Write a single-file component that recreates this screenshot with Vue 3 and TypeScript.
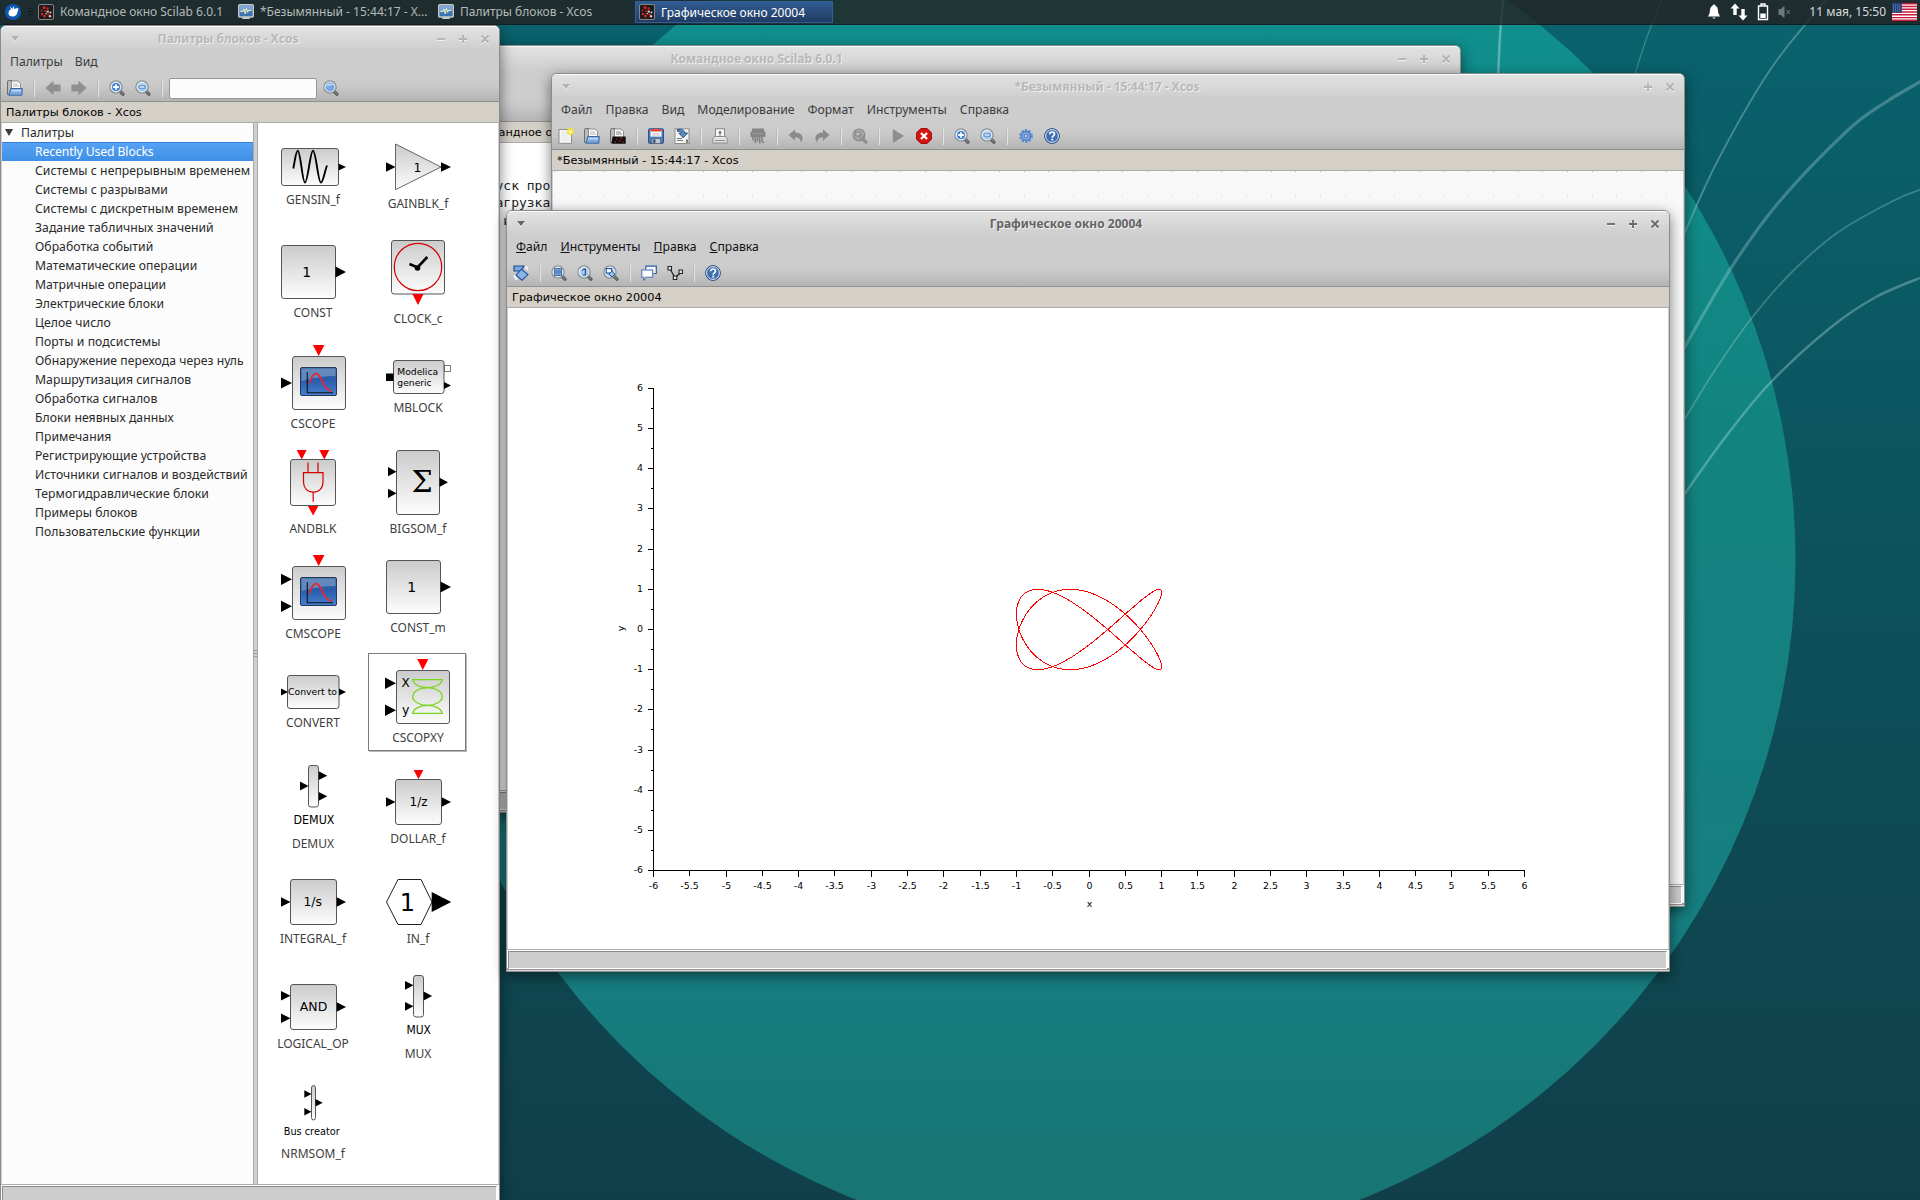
<script setup lang="ts">
interface Arrow {
  x: number
  y: number
  w: number
  h: number
  dir: 'r' | 'd'
}
interface BlockText {
  t: string
  x: number
  y: number
  size: number
  w?: number
  serif?: boolean
}
interface Block {
  name: string
  h: number
  box?: [number, number, number, number]
  arrows: Arrow[]
  texts?: BlockText[]
  art?: 'sine' | 'gain' | 'clock' | 'scope' | 'mblock' | 'and' | 'xy' | 'hex'
  selected?: boolean
}

const r = (x: number, y: number, w: number, h: number): Arrow => ({ x, y, w, h, dir: 'r' })
const d = (x: number, y: number, w: number, h: number): Arrow => ({ x, y, w, h, dir: 'd' })

function arrowPoints(a: Arrow): string {
  if (a.dir === 'r') return `${a.x},${a.y - a.h} ${a.x + a.w},${a.y} ${a.x},${a.y + a.h}`
  return `${a.x - a.h},${a.y} ${a.x + a.h},${a.y} ${a.x},${a.y + a.w}`
}

const blocks: Block[] = [
  { name: 'GENSIN_f', h: 64, box: [18.5, 20.5, 57, 37], arrows: [r(75.5, 39, 7.5, 3.6)], art: 'sine' },
  { name: 'GAINBLK_f', h: 68, arrows: [r(18, 39, 9.5, 4.7), r(73, 39, 10, 4.7)], art: 'gain', texts: [{ t: '1', x: 49.5, y: 43.5, size: 12.5 }] },
  { name: 'CONST', h: 72, box: [18.5, 12.5, 54, 53], arrows: [r(72.5, 39, 10.5, 5.6)], texts: [{ t: '1', x: 43.7, y: 43.5, size: 14 }] },
  { name: 'CLOCK_c', h: 78, box: [23.5, 7.5, 53, 53.5], arrows: [d(50, 61, 11, 5.6)], art: 'clock' },
  { name: 'CSCOPE', h: 78, box: [29.5, 18.5, 53, 53], arrows: [d(55.7, 7, 11, 5.8), r(18, 45, 11, 5.6)], art: 'scope' },
  { name: 'MBLOCK', h: 62, box: [25.5, 22.5, 50.5, 33], arrows: [r(76, 47.5, 7, 3.4)], art: 'mblock', texts: [{ t: 'Modelica', x: 49.7, y: 36.5, size: 9.3, w: 40.7 }, { t: 'generic', x: 46.5, y: 48, size: 9.3, w: 34.3 }] },
  { name: 'ANDBLK', h: 78, box: [27.5, 16.5, 45, 46], arrows: [d(38.7, 7, 9.5, 5), d(61.3, 7, 9.5, 5), d(50.1, 63, 9.5, 5.2)], art: 'and' },
  { name: 'BIGSOM_f', h: 78, box: [28.5, 7.5, 43, 64], arrows: [r(20, 28.7, 8.5, 4.6), r(20, 50.3, 8.5, 4.6), r(71.5, 39.3, 8.5, 4.6)], texts: [{ t: 'Σ', x: 54, y: 49.3, size: 30, serif: true }] },
  { name: 'CMSCOPE', h: 78, box: [29.5, 18.5, 53, 53], arrows: [d(55.7, 7, 11, 5.8), r(18, 31.3, 11, 5.6), r(18, 58.3, 11, 5.6)], art: 'scope' },
  { name: 'CONST_m', h: 72, box: [18.5, 12.5, 54, 53], arrows: [r(72.5, 39, 10.5, 5.6)], texts: [{ t: '1', x: 43.7, y: 43.5, size: 14 }] },
  { name: 'CONVERT', h: 62, box: [24.5, 22.5, 51.5, 33], arrows: [r(18, 39, 7, 3.4), r(76, 39, 7, 3.4)], texts: [{ t: 'Convert to', x: 49.5, y: 42.3, size: 9.3, w: 49 }] },
  { name: 'CSCOPXY', h: 77, box: [28.5, 17.5, 53, 53], arrows: [d(54.8, 6, 11, 5.6), r(17, 30.3, 11, 5.8), r(17, 57.3, 11, 5.8)], art: 'xy', selected: true, texts: [{ t: 'X', x: 37.7, y: 33.5, size: 12 }, { t: 'y', x: 37.7, y: 60.5, size: 12.5 }] },
  { name: 'DEMUX', h: 78, box: [45.5, 7.5, 10, 41.5], arrows: [r(37, 28, 8.5, 4.4), r(55.7, 17.7, 8.6, 4.4), r(55.7, 38.3, 8.6, 4.4)], texts: [{ t: 'DEMUX', x: 51, y: 65.7, size: 12, w: 41 }] },
  { name: 'DOLLAR_f', h: 73, box: [27.5, 21.5, 46, 45], arrows: [d(50.5, 12, 9.3, 4.8), r(18, 44, 9.5, 4.7), r(73.7, 44, 9.3, 4.7)], texts: [{ t: '1/z', x: 50.5, y: 48.2, size: 12, w: 18 }] },
  { name: 'INTEGRAL_f', h: 68, box: [27.5, 16.5, 46, 45], arrows: [r(18, 39, 9.5, 4.7), r(73.7, 39, 9.3, 4.7)], texts: [{ t: '1/s', x: 49.7, y: 43.2, size: 12, w: 18.5 }] },
  { name: 'IN_f', h: 68, arrows: [r(63.7, 39, 19.5, 10)], art: 'hex', texts: [{ t: '1', x: 39.3, y: 47.7, size: 24 }] },
  { name: 'LOGICAL_OP', h: 68, box: [27.5, 16.5, 46, 45], arrows: [r(18, 27.7, 9.5, 4.7), r(18, 50.3, 9.5, 4.7), r(73.7, 39, 9.3, 4.7)], texts: [{ t: 'AND', x: 50.5, y: 43.3, size: 12.5, w: 27.5 }] },
  { name: 'MUX', h: 78, box: [45.5, 7.5, 10, 41.5], arrows: [r(37, 17.3, 8.5, 4.4), r(37, 38.3, 8.5, 4.4), r(55.7, 28, 8.4, 4.4)], texts: [{ t: 'MUX', x: 50.7, y: 65.7, size: 12, w: 24.5 }] },
  { name: 'NRMSOM_f', h: 73, box: [48.5, 12.5, 4, 34.5], arrows: [r(41.3, 21, 7.2, 3.8), r(41.3, 38.7, 7.2, 3.8), r(52.5, 29.7, 7.2, 3.8)], texts: [{ t: 'Bus creator', x: 48.7, y: 61.6, size: 9.6, w: 56 }] },
]

const palettes: string[] = [
  'Recently Used Blocks',
  'Системы с непрерывным временем',
  'Системы с разрывами',
  'Системы с дискретным временем',
  'Задание табличных значений',
  'Обработка событий',
  'Математические операции',
  'Матричные операции',
  'Электрические блоки',
  'Целое число',
  'Порты и подсистемы',
  'Обнаружение перехода через нуль',
  'Маршрутизация сигналов',
  'Обработка сигналов',
  'Блоки неявных данных',
  'Примечания',
  'Регистрирующие устройства',
  'Источники сигналов и воздействий',
  'Термогидравлические блоки',
  'Примеры блоков',
  'Пользовательские функции',
]

const xcosMenu = ['Файл', 'Правка', 'Вид', 'Моделирование', 'Формат', 'Инструменты', 'Справка']
const figureMenu = ['Файл', 'Инструменты', 'Правка', 'Справка']
const xcosTools = ['new', 'open', 'openscilab', '|', 'save', 'export', '|', 'print', '|', 'shred', '|', 'undo', 'redo', '|', 'fit', '|', 'play', 'stop', '|', 'zoomin', 'zoomout', '|', 'gear', 'help']
const figureTools = ['rotate', '|', 'zoomgrid', 'zoomone', 'zoomarea', '|', 'copywin', 'datatip', '|', 'help']

const X0 = 1089
const Y0 = 629.5
const SX = 72.58
const SY = 40.17

const ticks = Array.from({ length: 25 }, (_, i) => -6 + i * 0.5)
const xTicks = ticks.map((v) => ({ v, px: Math.round(X0 + v * SX - 0.5) + 0.5, major: Number.isInteger(v) }))
const yTicks = ticks.map((v) => ({ v, py: Math.round(Y0 - v * SY - 0.5) + 0.5, major: Number.isInteger(v) }))

const curve = Array.from({ length: 361 }, (_, i) => {
  const t = (i * Math.PI) / 180
  const x = X0 + SX * Math.sin(2 * t + Math.PI / 4)
  const y = Y0 - SY * Math.sin(3 * t)
  return `${x.toFixed(2)},${y.toFixed(2)}`
}).join(' ')

const dots = Array.from({ length: 46 }, (_, i) => Math.round(578 + (i - 1) * 24.7 - 552))

// Catmull-Rom spline through the sample points of a wallpaper ray
function spline(p: number[][]): string {
  let s = `M${p[0][0]} ${p[0][1]}`
  for (let i = 0; i < p.length - 1; i++) {
    const a = p[Math.max(0, i - 1)]
    const b = p[i]
    const c = p[i + 1]
    const e = p[Math.min(p.length - 1, i + 2)]
    s += `C${b[0] + (c[0] - a[0]) / 6} ${b[1] + (c[1] - a[1]) / 6} ${c[0] - (e[0] - b[0]) / 6} ${c[1] - (e[1] - b[1]) / 6} ${c[0]} ${c[1]}`
  }
  return s
}
const rays = [
  { w: 2.4, o: 0.4, p: spline([[1503, 0], [1500, 36], [1498, 80]]) },
  { w: 1.3, o: 0.25, p: spline([[1662, 0], [1647, 37], [1635, 74]]) },
  { w: 1.8, o: 0.32, p: spline([[1826, 0], [1809, 20], [1768, 73], [1718, 160], [1686, 230], [1672, 264]]) },
  { w: 3.2, o: 0.28, p: spline([[1925, 79], [1886, 102], [1847, 131], [1779, 202], [1731, 268], [1686, 345], [1671, 374]]) },
  { w: 1.8, o: 0.26, p: spline([[1925, 188], [1895, 200], [1837, 233], [1790, 274], [1751, 319], [1717, 367], [1686, 417], [1671, 444]]) },
  { w: 2.5, o: 0.32, p: spline([[1925, 276], [1876, 297], [1830, 328], [1771, 382], [1727, 435], [1686, 492], [1671, 515]]) },
]
</script>

<template>
  <div class="desktop">
    <svg class="wallpaper" width="1920" height="1200" viewBox="0 0 1920 1200">
      <defs>
        <linearGradient id="wallBg" x1="0" y1="0" x2="0" y2="1">
          <stop offset="0" stop-color="#09636d" />
          <stop offset=".35" stop-color="#0b5660" />
          <stop offset=".75" stop-color="#0f4852" />
          <stop offset="1" stop-color="#103f4a" />
        </linearGradient>
        <linearGradient id="wallDisc" x1="0" y1="0" x2="0" y2="1">
          <stop offset=".08" stop-color="#10908f" />
          <stop offset=".4" stop-color="#128480" />
          <stop offset=".8" stop-color="#177d80" />
          <stop offset="1" stop-color="#18736f" />
        </linearGradient>
      </defs>
      <rect width="1920" height="1200" fill="url(#wallBg)" />
      <circle cx="1108" cy="560" r="687.500" fill="url(#wallDisc)" />
      <path v-for="(ray, i) in rays" :key="i" :d="ray.p" fill="none" stroke="#cdebe8" :stroke-width="ray.w" :stroke-opacity="ray.o" />
    </svg>

    <svg class="defs" width="0" height="0">
      <defs>
        <linearGradient id="boxFill" x1="0" y1="0" x2="0" y2="1">
          <stop offset="0" stop-color="#cbcbcb" />
          <stop offset="1" stop-color="#fdfdfd" />
        </linearGradient>
        <linearGradient id="screenFill" x1="0" y1="0" x2="0" y2="1">
          <stop offset="0" stop-color="#3465a4" />
          <stop offset=".45" stop-color="#2a5caa" />
          <stop offset="1" stop-color="#4480d0" />
        </linearGradient>
        <linearGradient id="lens" x1="0" y1="0" x2="1" y2="1">
          <stop offset="0" stop-color="#d4e6f8" />
          <stop offset="1" stop-color="#86b4e4" />
        </linearGradient>
        <symbol id="i-lens" viewBox="0 0 16 16">
          <path d="M10.6 10.8 13.9 14.2" stroke="#4c4f50" stroke-width="3.2" stroke-linecap="round" />
          <path d="M11.8 11.8 13.9 14" stroke="#8a8d8b" stroke-width="1.2" stroke-linecap="round" />
          <circle cx="7" cy="7" r="6.1" fill="url(#lens)" stroke="#8b8f90" stroke-width="1.3" />
          <circle cx="7" cy="7" r="4.9" fill="none" stroke="#eef5fb" stroke-width=".9" />
        </symbol>
        <symbol id="i-zoomin" viewBox="0 0 16 16">
          <use href="#i-lens" width="16" height="16" />
          <circle cx="7" cy="7" r="3.9" fill="#3f7fcb" />
          <path d="M7 4.2V9.8M4.2 7H9.8" stroke="#fff" stroke-width="1.8" />
        </symbol>
        <symbol id="i-zoomout" viewBox="0 0 16 16">
          <use href="#i-lens" width="16" height="16" />
          <path d="M3.6 7H10.4" stroke="#2f6fbd" stroke-width="3" />
          <path d="M4.4 7H9.6" stroke="#fff" stroke-width="1.4" />
        </symbol>
        <symbol id="i-search" viewBox="0 0 16 16">
          <use href="#i-lens" width="16" height="16" />
          <circle cx="7" cy="7" r="4.4" fill="#77a8dd" />
          <path d="M3.6 6.6A3.6 3.6 0 0 1 7 3.4C8.6 3.4 9.6 4.2 10 5.2 8 5 5.4 5.4 3.6 6.6Z" fill="#c9def4" />
        </symbol>
        <symbol id="i-zoomgrid" viewBox="0 0 16 16">
          <use href="#i-lens" width="16" height="16" />
          <rect x="3.2" y="3.2" width="7.600" height="7.600" fill="#1f56a0" />
          <path d="M4.200 4.900H9.900M4.200 7H9.900M4.200 9.100H9.900" stroke="#f2f8ff" stroke-width="1.200" stroke-dasharray="1.300 .8" />
        </symbol>
        <symbol id="i-zoomone" viewBox="0 0 16 16">
          <use href="#i-lens" width="16" height="16" />
          <path d="M4.6 5.6 6.6 3.4H9V10.6H5.8V6.2Z" fill="#1f56a0" />
          <path d="M6.9 4.9V9.6" stroke="#fff" stroke-width="1.3" />
        </symbol>
        <symbol id="i-zoomarea" viewBox="0 0 16 16">
          <use href="#i-lens" width="16" height="16" />
          <rect x="3.2" y="3.6" width="5.4" height="4.4" fill="#fff" stroke="#1f56a0" stroke-width="1.1" />
          <path d="M8.8 6.2 12 9.2 9 12 6 9.2Z" fill="#9cc3ee" stroke="#1f56a0" />
        </symbol>
        <symbol id="i-fit" viewBox="0 0 16 16">
          <path d="M10.6 10.8 13.9 14.2" stroke="#8c8c8c" stroke-width="3.2" stroke-linecap="round" />
          <circle cx="7" cy="7" r="5.8" fill="#ababab" stroke="#8f8f8f" stroke-width="1.5" />
          <rect x="3.6" y="4" width="4.8" height="4" fill="#b9b9b9" stroke="#858585" />
          <path d="M8.8 6.2 11.6 9 9 11.6 6.4 9Z" fill="#a2a2a2" stroke="#858585" />
        </symbol>
        <symbol id="i-open" viewBox="0 0 16 16">
          <path d="M.5 14.5V1.5C.5 1 .8.6 1.300 .6H5L6 2.500V14.500Z" fill="#b9bcb8" stroke="#6b6e6a" />
          <path d="M4.500 1H11L13.500 3.400V10H4.500Z" fill="#fafafa" stroke="#80837f" stroke-width=".9" />
          <path d="M6 4H11M6 6H12" stroke="#b3b5b1" stroke-width=".9" />
          <path d="M3.800 8.500H15.300L14.800 15.200H1.800Z" fill="#7aa8dc" stroke="#3566a8" />
          <path d="M4.600 9.600H14.200L14 11.800H3.900Z" fill="#b4d0f0" />
        </symbol>
        <symbol id="i-openscilab" viewBox="0 0 16 16">
          <path d="M.5 14.5V1.5C.5 1 .8.6 1.300 .6H5L6 2.500V14.500Z" fill="#b9bcb8" stroke="#6b6e6a" />
          <path d="M4.500 1H11L13.500 3.400V10H4.500Z" fill="#fafafa" stroke="#80837f" stroke-width=".9" />
          <path d="M6 4H11M6 6H12" stroke="#777" stroke-width=".9" />
          <path d="M2.500 8.500H15.700V15.700H1.500Z" fill="#0c0c0c" />
          <path d="M6 11H7.400M10.500 10.200H12.300M4.500 13.800H5.800M9 12.800H10.400M12.300 14H13.800" stroke="#e0221c" stroke-width="1.200" />
        </symbol>
        <symbol id="i-new" viewBox="0 0 16 16">
          <rect x="1" y="1.500" width="12.500" height="13.800" fill="#f6f6f4" stroke="#8d908b" />
          <rect x="3" y="3.500" width="8.500" height="9.800" fill="#ededeb" />
          <circle cx="12.500" cy="3.500" r="3.600" fill="#f4e52a" fill-opacity=".85" />
          <circle cx="12.500" cy="3.500" r="1.500" fill="#fffbc0" />
        </symbol>
        <symbol id="i-save" viewBox="0 0 16 16">
          <rect x=".6" y=".8" width="14.800" height="14.600" rx="1" fill="#4a7dbd" stroke="#264d82" />
          <rect x="2.500" y="1.200" width="11" height="7.400" fill="#fff" />
          <rect x="2.500" y="1.200" width="11" height="2.200" fill="#e03127" />
          <path d="M4 5.200H12M4 7H12" stroke="#b5b5b5" stroke-width=".8" />
          <rect x="4" y="10.500" width="8.500" height="5" fill="#c3c6c8" stroke="#50616f" stroke-width=".7" />
          <rect x="5.200" y="11.400" width="2.300" height="3.400" fill="#344f70" />
        </symbol>
        <symbol id="i-export" viewBox="0 0 16 16">
          <rect x="1" y=".8" width="14" height="14.700" fill="#f4f4f2" stroke="#8a8d88" />
          <path d="M3 3H6M3 12.500H9M3 10.500H8" stroke="#777" stroke-width="1" />
          <path d="M3.500 1.500C7.500.5 10.500 2 10.800 5H13.600L9.200 9.800 4.800 5H7.400C7.300 3.400 6 2.300 3.500 3.300Z" fill="#5a8dc4" stroke="#1f4b80" stroke-width=".9" />
          <path d="M13 11.500V14.800" stroke="#222" stroke-width="1.200" />
        </symbol>
        <symbol id="i-print" viewBox="0 0 16 16">
          <rect x="3.500" y=".8" width="9" height="9" fill="#f6f6f6" stroke="#8a8a8a" />
          <path d="M8 2.500 10 5H8.700V7.500H7.300V5H6Z" fill="#777" />
          <path d="M2.500 8.500H13.500L15.300 11V15H.7V11Z" fill="#e6e6e6" stroke="#8a8a8a" />
          <path d="M2.500 12.500H13.500" stroke="#8f8f8f" stroke-width="1.200" />
        </symbol>
        <symbol id="i-shred" viewBox="0 0 16 16">
          <path d="M2 .6H14V3.500H15.500V9H.5V3.500H2Z" fill="#858585" />
          <rect x="2.500" y="5" width="11" height="1.300" fill="#979797" />
          <path d="M3 9V12.500M5.300 9V15M7.500 9V13.500M9.700 9V15.500M12 9V13.500L14 14.800" stroke="#858585" stroke-width="1.700" fill="none" />
        </symbol>
        <symbol id="i-undo" viewBox="0 0 16 16">
          <path d="M.6 7 7 1.200V4.500C12 4.500 15 7 14.600 11.500L12.500 15C13 11.500 11.500 9.500 7 9.500V12.800Z" fill="#8b8b8b" />
        </symbol>
        <symbol id="i-redo" viewBox="0 0 16 16">
          <path d="M15.400 7 9 1.200V4.500C4 4.500 1 7 1.400 11.500L3.500 15C3 11.500 4.500 9.500 9 9.500V12.800Z" fill="#8b8b8b" />
        </symbol>
        <symbol id="i-play" viewBox="0 0 16 16">
          <path d="M3.300 1.800 13.300 8 3.300 14.200Z" fill="#8e8e8e" stroke="#7c7c7c" stroke-width=".6" />
        </symbol>
        <symbol id="i-stop" viewBox="0 0 16 16">
          <path d="M4.800.6H11.200L15.400 4.800V11.200L11.200 15.400H4.800L.6 11.200V4.800Z" fill="#d5140f" stroke="#9b0a08" />
          <path d="M5 5 11 11M11 5 5 11" stroke="#fff" stroke-width="2.300" />
        </symbol>
        <symbol id="i-gear" viewBox="0 0 16 16">
          <circle cx="8" cy="8" r="5.600" fill="none" stroke="#5b8fd6" stroke-width="2.600" stroke-dasharray="2.300 1.218" />
          <circle cx="8" cy="8" r="4.300" fill="#8ab2e6" stroke="#3d75c2" stroke-width="1.200" />
          <circle cx="8" cy="8" r="1.900" fill="#cfcfcf" stroke="#3d75c2" stroke-width="1" />
        </symbol>
        <symbol id="i-help" viewBox="0 0 16 16">
          <circle cx="8" cy="8" r="7.400" fill="#2b5a9e" stroke="#23497f" stroke-width=".9" />
          <circle cx="8" cy="8" r="6.400" fill="#3f6fb1" stroke="#e8eff8" stroke-width="1" />
          <path d="M5.700 6.300C5.700 3.300 10.500 3.300 10.500 6.100 10.500 7.900 8.200 7.800 8.200 9.700" fill="none" stroke="#fff" stroke-width="1.700" />
          <rect x="7.300" y="10.700" width="1.800" height="1.800" fill="#fff" />
        </symbol>
        <symbol id="i-back" viewBox="0 0 16 16">
          <path d="M.4 8 8.500.8V4.500H15.600V11.500H8.500V15.200Z" fill="#8f8f8f" />
        </symbol>
        <symbol id="i-forward" viewBox="0 0 16 16">
          <path d="M15.600 8 7.500.8V4.500H.4V11.500H7.500V15.200Z" fill="#8f8f8f" />
        </symbol>
        <symbol id="i-rotate" viewBox="0 0 16 16">
          <path d="M1 1H11L8 6H1Z" fill="#7ba7dc" stroke="#1c4d8f" stroke-width="1.200" />
          <path d="M8.500 4.200 15 9.500 9 15.200 3 10Z" fill="#8db5e6" stroke="#24589e" stroke-width="1.100" />
          <path d="M12 1.500C14 2 14.500 3.500 14.500 5M1.500 10C1.500 12.500 2.500 14 4.500 14.500" stroke="#f4f4f4" stroke-width="1.800" fill="none" />
        </symbol>
        <symbol id="i-copywin" viewBox="0 0 16 16">
          <path d="M4.800 4.500V1.200H15.300V8.500H12.500" fill="#f4f8fd" stroke="#2c5fa6" stroke-width="1.200" />
          <rect x=".8" y="5" width="10.800" height="7.300" fill="#fbfdff" stroke="#5f83b5" stroke-width="1.200" />
          <path d="M2.800 12.500V15.300L5.500 12.500" fill="#fbfdff" stroke="#2c5fa6" />
        </symbol>
        <symbol id="i-datatip" viewBox="0 0 16 16">
          <path d="M3 4 8 12.500 13.500 8" fill="none" stroke="#222" stroke-width="1.300" />
          <path d="M1 1.500H4.500V5H1ZM12 5H15.500V8.500H12ZM6.300 11H9.800V14.500H6.300Z" fill="#e8e8e8" stroke="#222" stroke-width="1.100" />
        </symbol>
        <symbol id="i-scilab" viewBox="0 0 16 16">
          <rect x=".5" y=".5" width="15" height="15" rx="1.500" fill="#1b1b1d" stroke="#8a8482" />
          <g fill="#d8221e">
            <circle cx="6" cy="3.600" r="1.500" />
            <circle cx="9.500" cy="4.500" r="1.200" />
            <circle cx="3.500" cy="6.500" r=".9" />
            <circle cx="7" cy="7" r="1" />
            <circle cx="4" cy="10" r="1.300" />
            <circle cx="6.500" cy="12" r="1.500" />
            <circle cx="10.500" cy="10.500" r="1.100" />
          </g>
          <g fill="#e9c3bd">
            <circle cx="9.800" cy="7.600" r="1.200" />
            <circle cx="12.500" cy="8.500" r="1" />
            <circle cx="12" cy="12.300" r="1.200" />
            <circle cx="8.200" cy="9.600" r=".8" />
          </g>
        </symbol>
        <symbol id="i-xcos" viewBox="0 0 16 16">
          <rect x=".7" y=".7" width="14.600" height="12.300" rx="1" fill="#3f74b4" stroke="#c9cbc9" stroke-width="1.400" />
          <path d="M1.500 1.500H14.500V6C9 6.500 5 7 1.500 9Z" fill="#7fa6d3" />
          <path d="M2.500 7.500H5L6 5 7.200 10 8.500 4.500 9.700 8.500 10.500 6.500H13.500" fill="none" stroke="#e6f3b8" stroke-width="1" />
          <path d="M4 15H12L11 13H5Z" fill="#c9cbc9" />
        </symbol>
      </defs>
    </svg>

    <!-- console window -->
    <section class="win console">
      <header class="head">
        <div class="title">
          <span class="caret"></span>
          <span class="caption">Командное окно Scilab 6.0.1</span>
          <svg class="btn" viewBox="0 0 22 22"><path d="M7 11H15" /></svg>
          <svg class="btn" viewBox="0 0 22 22"><path d="M7 11H15M11 7V15" /></svg>
          <svg class="btn" viewBox="0 0 22 22"><path d="M7.500 7.500 14.500 14.500M14.500 7.500 7.500 14.500" /></svg>
        </div>
      </header>
      <div class="dock dock-console">Командное окно Scilab 6.0.1</div>
      <div class="body"><pre class="log">Запуск программы:
  загрузка исходного окружения
    и</pre></div>
      <footer class="status"><div></div></footer>
    </section>

    <!-- Xcos diagram window -->
    <section class="win xcos">
      <header class="head">
        <div class="title">
          <span class="caret"></span>
          <span class="caption">*Безымянный - 15:44:17 - Xcos</span>
          <svg class="btn" viewBox="0 0 22 22"><path d="M7 11H15M11 7V15" /></svg>
          <svg class="btn" viewBox="0 0 22 22"><path d="M7.500 7.500 14.500 14.500M14.500 7.500 7.500 14.500" /></svg>
        </div>
        <nav class="menu"><span v-for="m in xcosMenu" :key="m">{{ m }}</span></nav>
        <div class="tools">
          <template v-for="(t, i) in xcosTools" :key="i">
            <span v-if="t === '|'" class="sep"></span>
            <svg v-else class="ico"><use :href="'#i-' + t" /></svg>
          </template>
        </div>
      </header>
      <div class="dock">*Безымянный - 15:44:17 - Xcos</div>
      <div class="body canvas">
        <svg width="1132" height="60" shape-rendering="crispEdges">
          <template v-for="x in dots" :key="x">
            <rect :x="x" y="0" width="1" height="1" fill="#bdbdbd" />
            <rect :x="x" y="25" width="1" height="1" fill="#c8c8c8" />
          </template>
        </svg>
      </div>
      <footer class="status"><div></div></footer>
    </section>

    <!-- palette browser -->
    <section class="win palette">
      <header class="head">
        <div class="title">
          <span class="caret"></span>
          <span class="caption">Палитры блоков - Xcos</span>
          <svg class="btn" viewBox="0 0 22 22"><path d="M7 11H15" /></svg>
          <svg class="btn" viewBox="0 0 22 22"><path d="M7 11H15M11 7V15" /></svg>
          <svg class="btn" viewBox="0 0 22 22"><path d="M7.500 7.500 14.500 14.500M14.500 7.500 7.500 14.500" /></svg>
        </div>
        <nav class="menu menu-palette"><span>Палитры</span><span>Вид</span></nav>
        <div class="tools">
          <svg class="ico"><use href="#i-open" /></svg>
          <span class="sep"></span>
          <svg class="ico"><use href="#i-back" /></svg>
          <svg class="ico"><use href="#i-forward" /></svg>
          <span class="sep"></span>
          <svg class="ico"><use href="#i-zoomin" /></svg>
          <svg class="ico"><use href="#i-zoomout" /></svg>
          <span class="sep"></span>
          <span class="field"></span>
          <svg class="ico"><use href="#i-search" /></svg>
        </div>
      </header>
      <div class="dock">Палитры блоков - Xcos</div>
      <div class="body split">
        <div class="tree">
          <div class="root"><span class="twisty"></span>Палитры</div>
          <div v-for="(p, i) in palettes" :key="p" class="leaf" :class="{ on: i === 0 }">{{ p }}</div>
        </div>
        <div class="divider"><i></i><i></i><i></i></div>
        <div class="grid">
          <figure v-for="b in blocks" :key="b.name" class="cell" :class="{ sel: b.selected }">
            <svg class="pic" width="98" :height="b.h" :viewBox="`0 0 98 ${b.h}`">
              <rect v-if="b.box" :x="b.box[0]" :y="b.box[1]" :width="b.box[2]" :height="b.box[3]" rx="2.500" fill="url(#boxFill)" stroke="#555" />
              <path v-if="b.art === 'sine'" d="M30.300 40.500C32 32 33 22.800 34.800 22.800 37.500 22.800 39.300 54.600 42 54.600 44.800 54.600 47.200 22.800 50 22.800 53 22.800 55 54.600 57.900 54.600 60 54.600 61.500 44 64 37.500" fill="none" stroke="#000" stroke-width="1.900" />
              <path v-if="b.art === 'gain'" d="M27.500 16V61.700L73 39Z" fill="url(#boxFill)" stroke="#555" stroke-width=".9" />
              <g v-if="b.art === 'clock'" fill="none">
                <circle cx="50" cy="34" r="23.700" stroke="#d40000" stroke-width="1.200" />
                <path d="M41.500 31 49.500 34.500 59.300 24" stroke="#000" stroke-width="2.600" />
                <circle cx="49.500" cy="35" r="2.800" fill="#000" />
              </g>
              <g v-if="b.art === 'scope'">
                <rect x="37.500" y="29.500" width="36" height="28" rx="1.500" fill="url(#screenFill)" stroke="#26395c" />
                <path d="M38.500 30.500H72.500V38C60 38 50 40 38.500 43Z" fill="#fff" fill-opacity=".25" />
                <path d="M44.300 34.300V54.700H70" fill="none" stroke="#111" stroke-width="1.100" />
                <path d="M46.500 45.500C48.500 38 51 35.300 53.500 35.600 59 36.300 60 53.500 69 52.500" fill="none" stroke="#f2232a" stroke-width="1.700" />
              </g>
              <g v-if="b.art === 'mblock'">
                <rect x="18" y="35.500" width="7.500" height="7.500" fill="#000" />
                <rect x="76.500" y="27.500" width="6" height="6" fill="#fff" stroke="#555" stroke-width=".8" />
              </g>
              <path v-if="b.art === 'and'" d="M40.500 29.700H60V39C60 45 56 49.200 50.200 49.200S40.500 45 40.500 39ZM45 19.500V29.700M55 19.500V29.700M50.200 49.200V58.800" fill="none" stroke="#d40000" stroke-width="1.200" />
              <g v-if="b.art === 'xy'" fill="none" stroke="#7bd51c" stroke-width="1.300">
                <path d="M44.700 26.700H74.300C73.500 31.500 67 34.700 59.500 34.700S45.500 31.500 44.700 26.700ZM44.700 60.400H74.300C73.500 55.500 67 52.400 59.500 52.400S45.500 55.500 44.700 60.400Z" />
                <ellipse cx="59.500" cy="43.500" rx="14.800" ry="8.900" />
              </g>
              <path v-if="b.art === 'hex'" d="M18.500 39 30 16.500H53L64 39 53 61.500H30Z" fill="#fff" stroke="#222" />
              <polygon v-for="(a, i) in b.arrows" :key="i" :points="arrowPoints(a)" :fill="a.dir === 'd' ? '#ff0000' : '#000'" />
              <text v-for="t in b.texts" :key="t.t" :x="t.x" :y="t.y" :font-size="t.size" :textLength="t.w" lengthAdjust="spacingAndGlyphs" text-anchor="middle" :class="{ serif: t.serif }">{{ t.t }}</text>
            </svg>
            <figcaption>{{ b.name }}</figcaption>
          </figure>
        </div>
      </div>
      <footer class="status"><div></div></footer>
    </section>

    <!-- figure window -->
    <section class="win plot active">
      <header class="head">
        <div class="title">
          <span class="caret"></span>
          <span class="caption">Графическое окно 20004</span>
          <svg class="btn" viewBox="0 0 22 22"><path d="M7 11H15" /></svg>
          <svg class="btn" viewBox="0 0 22 22"><path d="M7 11H15M11 7V15" /></svg>
          <svg class="btn" viewBox="0 0 22 22"><path d="M7.500 7.500 14.500 14.500M14.500 7.500 7.500 14.500" /></svg>
        </div>
        <nav class="menu"><span v-for="m in figureMenu" :key="m"><u>{{ m[0] }}</u>{{ m.slice(1) }}</span></nav>
        <div class="tools">
          <template v-for="(t, i) in figureTools" :key="i">
            <span v-if="t === '|'" class="sep"></span>
            <svg v-else class="ico"><use :href="'#i-' + t" /></svg>
          </template>
        </div>
      </header>
      <div class="dock">Графическое окно 20004</div>
      <div class="body">
        <svg class="axes" width="1160" height="641" viewBox="508 308 1160 641">
          <g shape-rendering="crispEdges" stroke="#000" fill="none">
            <path d="M653.500 388V871M653 870.500H1525" />
            <path v-for="t in xTicks" :key="'x' + t.v" :d="`M${t.px} 870V${t.major ? 877 : 876}`" />
            <path v-for="t in yTicks" :key="'y' + t.v" :d="`M653 ${t.py}H${t.major ? 648 : 651}`" />
            <polyline :points="curve" stroke="#ff0000" />
          </g>
          <text v-for="t in xTicks" :key="'xl' + t.v" :x="t.px" y="889" text-anchor="middle">{{ t.v }}</text>
          <template v-for="t in yTicks" :key="'yl' + t.v">
            <text v-if="t.major" x="643" :y="t.py + 2.500" text-anchor="end">{{ t.v }}</text>
          </template>
          <text x="1089.500" y="907" text-anchor="middle">x</text>
          <text transform="translate(623.500 628.500) rotate(-90)" text-anchor="middle">y</text>
        </svg>
      </div>
      <footer class="status"><div></div></footer>
    </section>

    <!-- top panel -->
    <div class="panel">
      <svg class="mouse" width="16" height="16" viewBox="0 0 16 16">
        <circle cx="8" cy="8" r="8" fill="#0d57b5" />
        <path d="M3.500 9.500C3.500 6.500 5 5.500 6 5.500L5 2.500 7.500 5 8.500 2 9.500 5.200C10.500 4.500 12.500 4 13.500 4.500 12.500 7 12.500 12.500 8 12.500 5 12.500 3.500 11.500 3.500 9.500Z" fill="#fff" />
      </svg>
      <span class="grip"></span>
      <div class="task"><svg class="ico"><use href="#i-scilab" /></svg><span>Командное окно Scilab 6.0.1</span></div>
      <div class="task"><svg class="ico"><use href="#i-xcos" /></svg><span>*Безымянный - 15:44:17 - X...</span></div>
      <div class="task"><svg class="ico"><use href="#i-xcos" /></svg><span>Палитры блоков - Xcos</span></div>
      <div class="task current"><svg class="ico"><use href="#i-scilab" /></svg><span>Графическое окно 20004</span></div>
      <div class="tray">
        <svg width="16" height="16" viewBox="0 0 16 16"><path d="M8 .5C9 .5 9.300 1.200 9.400 1.800 12 3 12 6 12.300 9L14 12.500H2L3.700 9C4 6 4 3 6.600 1.800 6.700 1.200 7 .5 8 .5ZM6.500 13.500H9.500C9.300 15 6.700 15 6.500 13.500Z" fill="#fff" /></svg>
        <svg width="18" height="18" viewBox="0 0 18 18"><path d="M5 .5 9.500 5.500H6.700V12H3.300V5.500H.5ZM13 17.500 8.500 12.500H11.300V6H14.700V12.500H17.500Z" fill="#fff" /></svg>
        <svg width="12" height="18" viewBox="0 0 12 18"><path d="M4 3V1H8V3M1.500 3H10.500V16.500H1.500Z" fill="none" stroke="#fff" stroke-width="1.400" /><rect x="3.300" y="10.500" width="5.400" height="4.500" fill="#fff" /></svg>
        <svg width="16" height="16" viewBox="0 0 16 16"><path d="M2 5.500H4L7 2.500V13.500L4 10.500H2ZM9.500 6 13 10M13 6 9.500 10" fill="#6d7a7b" stroke="#6d7a7b" stroke-width="1" /></svg>
      </div>
      <span class="clock">11 мая, 15:50</span>
      <svg class="flag" width="25" height="18" viewBox="0 0 25 18">
        <rect width="25" height="18" fill="#fff" />
        <path d="M0 .7H25M0 3.500H25M0 6.300H25M0 9H25M0 11.800H25M0 14.600H25M0 17.300H25" stroke="#c8183c" stroke-width="1.400" />
        <rect width="10" height="9.700" fill="#27407c" />
        <path d="M1 2H9.500M1 4H9.500M1 6H9.500M1 8H9.500" stroke="#b9c3dd" stroke-width=".7" stroke-dasharray=".8 1.200" />
      </svg>
    </div>
  </div>
</template>

<style>
body {
  background: #0b5660;
}
</style>

<style scoped>
.desktop {
  position: relative;
  width: 1920px;
  height: 1200px;
  overflow: hidden;
  font-family: 'Noto Sans', 'Open Sans', sans-serif;
  font-size: 12.2px;
  color: #3c3c3c;
}
.wallpaper {
  display: block;
}
.defs {
  position: absolute;
}
.ico {
  width: 16px;
  height: 16px;
  flex: none;
}

/* windows */
.win {
  position: absolute;
  box-sizing: border-box;
  display: flex;
  flex-direction: column;
  border: 1px solid #8c8c8c;
  border-radius: 6px 6px 0 0;
  background: #cdcdcd;
  box-shadow: 0 4px 14px rgba(0, 0, 0, 0.5);
}
.console {
  left: 96px;
  top: 45px;
  width: 1365px;
  height: 768px;
}
.xcos {
  left: 551px;
  top: 73px;
  width: 1134px;
  height: 834px;
}
.palette {
  left: 0;
  top: 25px;
  width: 500px;
  height: 1182px;
}
.plot {
  left: 506px;
  top: 210px;
  width: 1164px;
  height: 762px;
}
.head {
  flex: none;
  box-sizing: border-box;
  height: 76px;
  border-top: 1px solid #fbfbfb;
  border-bottom: 1px solid #8f8f8f;
  border-radius: 5px 5px 0 0;
  background: linear-gradient(#e2e2e2, #cdcdcd 24px, #cdcdcd 50px, #cacaca 58px, #b4b4b4);
}
.title {
  display: flex;
  align-items: center;
  height: 23px;
  padding: 0 3px 0 10px;
}
.caret {
  width: 0;
  border: 4px solid transparent;
  border-top: 5px solid #b2b2b2;
  border-bottom: 0;
  filter: drop-shadow(0 1px 0 #f2f2f2);
}
.caption {
  flex: 1;
  padding-left: 7px;
  text-align: center;
  font-weight: bold;
  font-size: 12px;
  line-height: 23px;
  color: #b8b8b8;
  text-shadow: 1px 1px 0 #f0f0f0;
}
.btn {
  width: 22px;
  height: 22px;
  fill: none;
  stroke: #b2b2b2;
  stroke-width: 1.8;
  filter: drop-shadow(0 1px 0 #f2f2f2);
}
.active .caret {
  border-top-color: #666;
}
.active .caption {
  color: #646464;
}
.active .btn {
  stroke: #686868;
}
.active .menu {
  color: #111;
}
.menu {
  display: flex;
  gap: 13px;
  height: 22px;
  padding-left: 9px;
  line-height: 24px;
}
.menu-palette {
  gap: 12px;
}
.tools {
  display: flex;
  align-items: center;
  gap: 10px;
  height: 29px;
  padding: 3px 0 0 6px;
  box-sizing: border-box;
}
.sep {
  width: 1px;
  height: 17px;
  background: #bababa;
  border-right: 1px solid #e4e4e4;
}
.field {
  box-sizing: border-box;
  width: 148px;
  height: 21px;
  margin: 0 -4px 0 -4px;
  border: 1px solid #969696;
  border-radius: 2px;
  background: #fcfcfc;
}
.dock {
  flex: none;
  height: 20px;
  padding-left: 5px;
  border-bottom: 1px solid #acacac;
  background: #d4cfc7;
  font: 11.3px/21px 'DejaVu Sans', sans-serif;
  color: #000;
  white-space: nowrap;
}
.dock-console {
  padding-left: 378px;
}
.body {
  flex: 1;
  min-height: 0;
  margin: 0 1px;
  background: #fff;
  overflow: hidden;
}
.canvas {
  background: #f8f8f8;
}
.log {
  margin: 34px 0 0 374px;
  font: 13px/17.300px 'DejaVu Sans Mono', monospace;
  color: #222;
}
.status {
  flex: none;
  box-sizing: border-box;
  height: 22px;
  border-top: 1px solid #b0b0b0;
  border-bottom: 1px solid #d8d8d8;
  padding-bottom: 1px;
  background: linear-gradient(#f8f8f8 90%, #949494 90%);
}
.status div {
  box-sizing: border-box;
  height: 18px;
  margin: 1px 2px 1px 1px;
  border: 1px solid #8d8d8d;
  border-right-color: #fff;
  border-bottom-color: #fff;
  background: #cdcdcd;
}

/* palette browser */
.split {
  display: flex;
}
.tree {
  width: 251px;
  background: #fcfcfc;
  line-height: 19px;
  letter-spacing: 0.05px;
  color: #2a2a2a;
  white-space: nowrap;
}
.root {
  display: flex;
  align-items: center;
  height: 19px;
  padding-left: 3px;
}
.twisty {
  margin-right: 8px;
  border: 4.500px solid transparent;
  border-top: 7px solid #3c3c3c;
  border-bottom: 0;
}
.leaf {
  height: 19px;
  padding-left: 33px;
}
.leaf.on {
  background: linear-gradient(#56a3f6, #3e8fe6);
  box-shadow: inset 0 1px 0 #2f7fd6;
  letter-spacing: -0.1px;
  color: #fff;
}
.divider {
  box-sizing: border-box;
  width: 5px;
  border: solid #a8a8a8;
  border-width: 0 1px;
  background: #cfcfcf;
  display: flex;
  flex-direction: column;
  justify-content: center;
  gap: 2px;
}
.divider i {
  height: 1px;
  background: #999;
}
.grid {
  flex: 1;
  display: grid;
  grid-template-columns: 98px 98px;
  grid-auto-rows: 98px;
  gap: 7px;
  padding: 5px 0 0 5px;
  align-content: start;
  background: #fff;
}
.cell {
  margin: 0;
  text-align: center;
}
.cell.sel {
  box-shadow: inset 0 0 0 1px #7c7c7c, 1px 1px 0 #b8b8b8;
}
.pic {
  display: block;
  font-family: 'DejaVu Sans', sans-serif;
  fill: #000;
}
.pic .serif {
  font-family: 'DejaVu Serif', serif;
}
.cell figcaption {
  padding-left: 2px;
  font-size: 12px;
  line-height: 16px;
  color: #404040;
}

.axes {
  display: block;
  font: 9.4px 'DejaVu Sans', sans-serif;
  fill: #000;
}

/* top panel */
.panel {
  position: absolute;
  left: 0;
  top: 0;
  box-sizing: border-box;
  display: flex;
  align-items: center;
  width: 1920px;
  height: 25px;
  padding: 0 3px 1px 5px;
  background: rgba(36, 30, 30, 0.78);
  box-shadow: inset 0 -1px 0 rgba(0, 0, 0, 0.3);
  font-size: 12px;
  color: #b5b9b9;
}
.grip {
  width: 5px;
  height: 9px;
  margin: 0 4px 0 7px;
  background: repeating-linear-gradient(#111a1b 0 1px, transparent 1px 3px);
}
.task {
  display: flex;
  align-items: center;
  gap: 6px;
  box-sizing: border-box;
  width: 198px;
  height: 22px;
  margin-right: 2px;
  border: 1px solid transparent;
  line-height: 18px;
  white-space: nowrap;
}
.task span {
  padding-bottom: 1px;
}
.task.current {
  margin: 0 0 0 -2px;
  padding-left: 3px;
  border-color: #2d5f9f;
  background: linear-gradient(#305c92, #2a4c7a 50%, #213c63);
  color: #fff;
}
.task.current span {
  padding: 1px 0 0;
}
.tray {
  display: flex;
  align-items: center;
  gap: 8.500px;
  margin-left: auto;
}
.clock {
  margin: 0 6px 0 16px;
  padding-bottom: 1px;
  color: #d9dcdc;
}
</style>
